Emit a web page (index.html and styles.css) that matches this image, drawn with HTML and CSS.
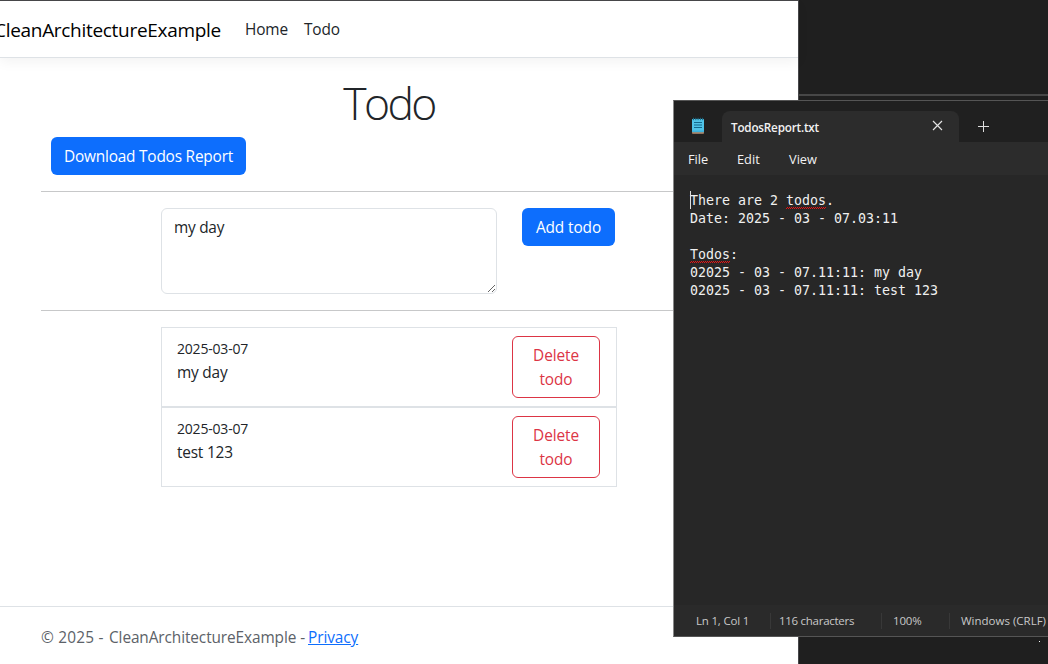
FILE: index.html
```html
<!DOCTYPE html>
<html lang="en">
<head>
<meta charset="utf-8">
<title>Todo - CleanArchitectureExample</title>
<link rel="stylesheet" href="styles.css">
</head>
<body>
<div class="desktop">
  <div class="browser">
    <header class="navbar">
      <a class="brand">CleanArchitectureExample</a>
      <nav class="nav-links"><a class="home-link">Home</a><a class="todo-link">Todo</a></nav>
    </header>
    <main class="content">
      <h1 class="title"><span>Todo</span></h1>
      <div class="toolbar"><button class="btn report"><span>Download Todos Report</span></button></div>
      <hr class="rule">
      <form class="add-form">
        <textarea class="input">my day</textarea>
        <button type="button" class="btn add"><span>Add todo</span></button>
      </form>
      <hr class="rule">
      <div class="list">
        <div class="item">
          <div class="item-text"><small class="date">2025-03-07</small><span class="my-day">my day</span></div>
          <button class="btn delete"><span>Delete</span><span>todo</span></button>
        </div>
        <div class="item">
          <div class="item-text"><small class="date">2025-03-07</small><span class="test">test 123</span></div>
          <button class="btn delete"><span>Delete</span><span>todo</span></button>
        </div>
      </div>
    </main>
    <footer class="footer"><span class="copy">© 2025 - </span><span class="owner">CleanArchitectureExample - </span><a class="privacy">Privacy</a></footer>
  </div>
  <div class="back-edge"></div>
  <div class="pointer-dot"></div>
  <section class="notepad">
    <div class="tabs">
      <svg class="app-icon" width="14" height="18" viewBox="0 0 14 18">
        <rect x="1" y="14" width="12" height="2.6" rx=".8" fill="#d9d3cd"/>
        <path d="M1 15.7h12" stroke="#c8652a" stroke-width="1.2"/>
        <rect x="1" y="2" width="12" height="13.2" rx=".6" fill="#50c4e8"/>
        <path d="M1 13.5h12v1.7H1z" fill="#3bb0dc"/>
        <path d="M2.5 .8v2.4M4.8 .8v2.4M7.1 .8v2.4M9.4 .8v2.4M11.6 .8v2.4" stroke="#1c6b86" stroke-width="1"/>
        <path d="M3 5.5h8M3 8h8M3 10.5h8" stroke="#12698c" stroke-width="1.1"/>
      </svg>
      <div class="tab">
        <span class="tab-name">TodosReport.txt</span>
        <svg class="close" width="11" height="11" viewBox="0 0 11 11"><path d="M1 1l9 9M10 1l-9 9" stroke="#e4e4e4" stroke-width="1.15" fill="none"/></svg>
      </div>
      <svg class="plus" width="11" height="11" viewBox="0 0 11 11"><path d="M5.5 0v11M0 5.5h11" stroke="#dedede" stroke-width="1"/></svg>
    </div>
    <div class="menu"><span class="m-file">File</span><span class="m-edit">Edit</span><span class="m-view">View</span></div>
    <div class="editor"><i class="caret"></i><pre class="text">There are 2 <span class="typo">todos</span>.
Date: 2025 - 03 - 07.03:11

<span class="typo">Todos</span>:
02025 - 03 - 07.11:11: my day
02025 - 03 - 07.11:11: test 123</pre></div>
    <div class="status"><span class="cell pos"><span>Ln 1, Col 1</span></span><span class="cell chars"><span>116 characters</span></span><span class="cell zoom"><span>100%</span></span><span class="cell eol"><span>Windows (CRLF)</span></span></div>
  </section>
</div>
</body>
</html>
```
FILE: styles.css
```css
* { box-sizing: border-box; }
body { margin: 0; background: #1f1f1f; }
.desktop { position: relative; width: 1048px; height: 664px; overflow: hidden; font: 400 15.4px/24px "Open Sans", "Noto Sans", sans-serif; letter-spacing: -.1px; color: #212529; }
.browser { display: flex; flex-direction: column; width: 799px; height: 664px; background: #fff; border-top: 1px solid #47474a; border-right: 1px solid #47474a; }

.navbar { display: flex; align-items: center; height: 57px; flex: none; border-bottom: 1px solid #dee2e6; box-shadow: 0 4px 12px rgba(0,0,0,.05); white-space: nowrap; }
.brand { margin-left: -6px; width: 251px; font-size: 19px; letter-spacing: -.3px; color: #000; padding-top: 1px; }
.nav-links { display: flex; gap: 17px; padding-top: 2px; letter-spacing: -.15px; }
.home-link { width: 42px; }

.content { display: flex; flex-direction: column; width: 696px; margin: 16px 0 0 41px; flex: 1; }
.title { margin: 0; height: 63px; font-size: 44.5px; line-height: 58px; font-weight: 300; letter-spacing: -2.6px; text-align: center; }
.toolbar { padding-left: 10px; }
.btn { display: flex; align-items: center; justify-content: center; padding: 2px 0 0; border: 0; border-radius: 6px; background: #0d6efd; color: #fff; font: inherit; letter-spacing: inherit; white-space: nowrap; }
.report { width: 195px; height: 38px; letter-spacing: -.2px; }
.add { width: 93px; height: 38px; }
.rule { width: 100%; height: 1px; margin: 16px 0; border: 0; background: #c7c8c9; flex: none; }
.add-form { display: flex; align-items: flex-start; gap: 25px; padding-left: 120px; height: 86px; }
.input { width: 336px; height: 86px; padding: 7px 12px; border: 1px solid #dee2e6; border-radius: 6px; font: inherit; letter-spacing: -.25px; color: inherit; background: #fff; resize: vertical; outline: 0; }
.list { width: 456px; margin-left: 120px; }
.item { display: flex; justify-content: space-between; align-items: flex-start; height: 80px; padding: 8px 16px; border: 1px solid #dee2e6; }
.item-text { display: flex; flex-direction: column; align-items: flex-start; margin-left: -1px; padding-top: 1px; letter-spacing: -.2px; }
.date { font-size: 14px; line-height: 24px; }
.delete { flex-direction: column; width: 88px; height: 62px; border: 1px solid #dc3545; background: #fff; color: #dc3545; line-height: 24px; }
.footer { display: flex; height: 58px; flex: none; padding-left: 41px; border-top: 1px solid #dee2e6; line-height: 62px; color: #5c6268; white-space: pre; letter-spacing: -.08px; }
.copy { width: 68px; letter-spacing: .2px; }
.owner { width: 199px; letter-spacing: -.1px; }
.privacy { color: #0d6efd; text-decoration: underline; }

.back-edge { position: absolute; left: 799px; top: 94px; width: 249px; height: 2px; background: #474747; }
.pointer-dot { position: absolute; left: 1039px; top: 641px; width: 1px; height: 1px; background: #fff; }
.notepad { position: absolute; left: 673px; top: 100px; width: 381px; height: 537px; display: flex; flex-direction: column; border: 1px solid #555; border-left-color: #888; background: #272727; color: #f2f2f2; white-space: nowrap; letter-spacing: 0; }
.tabs { display: flex; height: 41px; background: #202020; padding-left: 17px; flex: none; }
.app-icon { margin: 16px 17px 0 0; }
.tab { display: flex; width: 237px; height: 31px; margin-top: 10px; padding: 0 16px 0 9px; justify-content: space-between; align-items: center; border-radius: 8px 8px 0 0; background: #2c2c2c; }
.tab-name { font-size: 11.7px; font-weight: 600; letter-spacing: -.2px; }
.close { margin-bottom: 2px; }
.plus { margin: 20px 0 0 19px; }
.menu { display: flex; height: 33px; padding: 0 0 0 14px; flex: none; background: #2c2c2c; font-size: 12.8px; line-height: 34px; }
.m-file { width: 49px; }
.m-edit { width: 52px; }
.editor { position: relative; flex: 1; padding: 17px 0 0 16px; }
.text { margin: 0; font: 13.29px/18px "DejaVu Sans Mono", monospace; color: #f0f0f0; }
.typo { padding-bottom: 1px; background: linear-gradient(135deg, transparent 38%, #e81414 38% 62%, transparent 62%) 0 100% / 2px 2px repeat-x, linear-gradient(45deg, transparent 38%, #e81414 38% 62%, transparent 62%) 2px 100% / 4px 2px repeat-x; }
.caret { position: absolute; left: 16px; top: 16px; width: 1px; height: 18px; background: #ddd; }
.status { display: flex; align-items: center; height: 31px; flex: none; background: #2a2a2a; color: #c8c8c8; font-size: 11.5px; letter-spacing: -.2px; }
.cell { height: 16px; line-height: 16px; border-left: 1px solid #383838; }
.pos { width: 96px; padding-left: 21px; border-left-color: transparent; }
.chars { width: 111px; padding-left: 8px; letter-spacing: -.28px; }
.zoom { width: 68px; padding-left: 11px; }
.eol { padding-left: 11px; letter-spacing: 0; }
```
